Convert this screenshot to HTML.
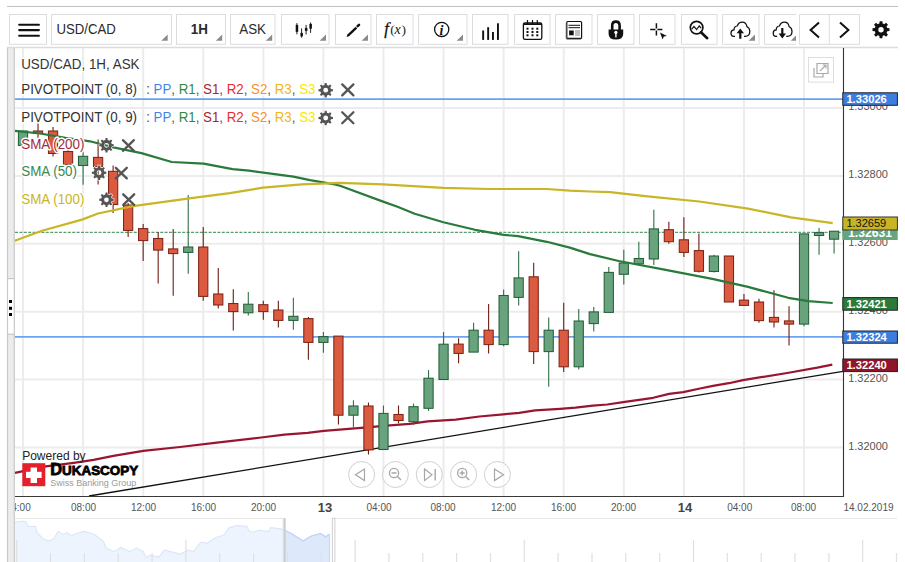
<!DOCTYPE html>
<html><head><meta charset="utf-8"><style>
html,body{margin:0;padding:0;background:#fff;}
body{width:905px;height:562px;position:relative;overflow:hidden;font-family:"Liberation Sans",sans-serif;}
</style></head><body>
<svg width="905" height="562" style="position:absolute;left:0;top:0"><rect x="7.5" y="48" width="6.8" height="230.6" fill="#ececec"/><rect x="7.5" y="334.3" width="6.8" height="228" fill="#ececec"/><line x1="7.5" y1="334.3" x2="14.3" y2="334.3" stroke="#c8c8c8" stroke-width="1.2"/><line x1="7.5" y1="47" x2="7.5" y2="562" stroke="#c8c8c8" stroke-width="1.2"/><line x1="14.3" y1="47" x2="14.3" y2="562" stroke="#c8c8c8" stroke-width="1.2"/><line x1="7.5" y1="278.6" x2="14.3" y2="278.6" stroke="#c8c8c8" stroke-width="1.2"/><rect x="9" y="300" width="3" height="3" fill="#000"/><rect x="9" y="306.8" width="3" height="3" fill="#000"/><rect x="9" y="313" width="3" height="3" fill="#000"/><line x1="7" y1="47.5" x2="898" y2="47.5" stroke="#dcdcdc" stroke-width="1.4"/><line x1="23.00" y1="48" x2="23.00" y2="496" stroke="#ececec" stroke-width="2"/><line x1="83.08" y1="48" x2="83.08" y2="496" stroke="#ececec" stroke-width="2"/><line x1="143.16" y1="48" x2="143.16" y2="496" stroke="#ececec" stroke-width="2"/><line x1="203.24" y1="48" x2="203.24" y2="496" stroke="#ececec" stroke-width="2"/><line x1="263.32" y1="48" x2="263.32" y2="496" stroke="#ececec" stroke-width="2"/><line x1="323.40" y1="48" x2="323.40" y2="496" stroke="#ececec" stroke-width="2"/><line x1="383.48" y1="48" x2="383.48" y2="496" stroke="#ececec" stroke-width="2"/><line x1="443.56" y1="48" x2="443.56" y2="496" stroke="#ececec" stroke-width="2"/><line x1="503.64" y1="48" x2="503.64" y2="496" stroke="#ececec" stroke-width="2"/><line x1="563.72" y1="48" x2="563.72" y2="496" stroke="#ececec" stroke-width="2"/><line x1="623.80" y1="48" x2="623.80" y2="496" stroke="#ececec" stroke-width="2"/><line x1="683.88" y1="48" x2="683.88" y2="496" stroke="#ececec" stroke-width="2"/><line x1="743.96" y1="48" x2="743.96" y2="496" stroke="#ececec" stroke-width="2"/><line x1="804.04" y1="48" x2="804.04" y2="496" stroke="#ececec" stroke-width="2"/><line x1="15" y1="108.0" x2="843" y2="108.0" stroke="#ececec" stroke-width="2"/><line x1="15" y1="175.9" x2="843" y2="175.9" stroke="#ececec" stroke-width="2"/><line x1="15" y1="243.8" x2="843" y2="243.8" stroke="#ececec" stroke-width="2"/><line x1="15" y1="311.7" x2="843" y2="311.7" stroke="#ececec" stroke-width="2"/><line x1="15" y1="379.6" x2="843" y2="379.6" stroke="#ececec" stroke-width="2"/><line x1="15" y1="447.5" x2="843" y2="447.5" stroke="#ececec" stroke-width="2"/><line x1="15" y1="99.2" x2="843" y2="99.2" stroke="#6aa0ef" stroke-width="1.8"/><line x1="15" y1="336.8" x2="843" y2="336.8" stroke="#6ea3ef" stroke-width="1.8"/><line x1="15" y1="232.3" x2="843" y2="232.3" stroke="#5a9e70" stroke-width="1.2" stroke-dasharray="3,1.4"/><line x1="89" y1="496" x2="843" y2="371.3" stroke="#111" stroke-width="1.3"/><path d="M15.0,472.8 L45.8,466.4 L73.7,462.8 L93.6,459.9 L113.4,455.9 L143.3,450.9 L180.0,447.0 L214.8,442.8 L261.2,437.5 L284.4,434.7 L307.6,432.9 L323.9,430.8 L361.0,427.8 L390.0,425.4 L409.8,423.8 L427.7,421.3 L455.6,419.7 L479.4,416.5 L503.3,414.3 L519.2,412.9 L535.1,410.3 L560.0,408.9 L575.4,407.7 L593.0,405.7 L607.2,404.5 L624.9,401.8 L653.2,397.8 L669.0,393.9 L683.2,392.1 L700.0,388.5 L713.0,385.9 L728.9,383.2 L743.0,380.1 L787.2,373.0 L817.3,367.7 L832.3,364.7" fill="none" stroke="#9a1630" stroke-width="2.2" stroke-linejoin="round"/><line x1="23.00" y1="131.0" x2="23.00" y2="145.5" stroke="#2f6f47" stroke-width="1.1"/><rect x="18.40" y="131.0" width="9.2" height="14.5" fill="#68a37e" stroke="#245f39" stroke-width="1.05"/><line x1="38.02" y1="123.0" x2="38.02" y2="138.0" stroke="#6e1b12" stroke-width="1.1"/><rect x="33.42" y="131.0" width="9.2" height="2.5" fill="#dc5a40" stroke="#7d2416" stroke-width="1.05"/><line x1="53.04" y1="127.0" x2="53.04" y2="156.5" stroke="#6e1b12" stroke-width="1.1"/><rect x="48.44" y="131.0" width="9.2" height="22.5" fill="#dc5a40" stroke="#7d2416" stroke-width="1.05"/><line x1="68.06" y1="150.0" x2="68.06" y2="165.5" stroke="#6e1b12" stroke-width="1.1"/><rect x="63.46" y="151.5" width="9.2" height="13.3" fill="#dc5a40" stroke="#7d2416" stroke-width="1.05"/><line x1="83.08" y1="151.7" x2="83.08" y2="184.8" stroke="#2f6f47" stroke-width="1.1"/><rect x="78.48" y="156.3" width="9.2" height="9.2" fill="#68a37e" stroke="#245f39" stroke-width="1.05"/><line x1="98.10" y1="139.6" x2="98.10" y2="184.5" stroke="#6e1b12" stroke-width="1.1"/><rect x="93.50" y="157.4" width="9.2" height="9.3" fill="#dc5a40" stroke="#7d2416" stroke-width="1.05"/><line x1="113.12" y1="165.5" x2="113.12" y2="213.0" stroke="#6e1b12" stroke-width="1.1"/><rect x="108.52" y="171.3" width="9.2" height="33.2" fill="#dc5a40" stroke="#7d2416" stroke-width="1.05"/><line x1="128.14" y1="203.0" x2="128.14" y2="237.0" stroke="#6e1b12" stroke-width="1.1"/><rect x="123.54" y="205.0" width="9.2" height="25.4" fill="#dc5a40" stroke="#7d2416" stroke-width="1.05"/><line x1="143.16" y1="224.0" x2="143.16" y2="261.0" stroke="#6e1b12" stroke-width="1.1"/><rect x="138.56" y="228.6" width="9.2" height="12.0" fill="#dc5a40" stroke="#7d2416" stroke-width="1.05"/><line x1="158.18" y1="232.0" x2="158.18" y2="283.6" stroke="#6e1b12" stroke-width="1.1"/><rect x="153.58" y="238.5" width="9.2" height="11.6" fill="#dc5a40" stroke="#7d2416" stroke-width="1.05"/><line x1="173.20" y1="229.0" x2="173.20" y2="295.7" stroke="#6e1b12" stroke-width="1.1"/><rect x="168.60" y="248.9" width="9.2" height="4.7" fill="#dc5a40" stroke="#7d2416" stroke-width="1.05"/><line x1="188.22" y1="195.0" x2="188.22" y2="273.7" stroke="#2f6f47" stroke-width="1.1"/><rect x="183.62" y="247.0" width="9.2" height="5.4" fill="#68a37e" stroke="#245f39" stroke-width="1.05"/><line x1="203.24" y1="227.0" x2="203.24" y2="300.7" stroke="#6e1b12" stroke-width="1.1"/><rect x="198.64" y="247.0" width="9.2" height="49.4" fill="#dc5a40" stroke="#7d2416" stroke-width="1.05"/><line x1="218.26" y1="268.0" x2="218.26" y2="308.4" stroke="#6e1b12" stroke-width="1.1"/><rect x="213.66" y="294.0" width="9.2" height="11.0" fill="#dc5a40" stroke="#7d2416" stroke-width="1.05"/><line x1="233.28" y1="289.2" x2="233.28" y2="330.6" stroke="#6e1b12" stroke-width="1.1"/><rect x="228.68" y="303.5" width="9.2" height="8.1" fill="#dc5a40" stroke="#7d2416" stroke-width="1.05"/><line x1="248.30" y1="292.0" x2="248.30" y2="315.6" stroke="#2f6f47" stroke-width="1.1"/><rect x="243.70" y="304.2" width="9.2" height="8.6" fill="#68a37e" stroke="#245f39" stroke-width="1.05"/><line x1="263.32" y1="300.8" x2="263.32" y2="319.7" stroke="#6e1b12" stroke-width="1.1"/><rect x="258.72" y="304.7" width="9.2" height="6.9" fill="#dc5a40" stroke="#7d2416" stroke-width="1.05"/><line x1="278.34" y1="300.8" x2="278.34" y2="327.4" stroke="#6e1b12" stroke-width="1.1"/><rect x="273.74" y="310.0" width="9.2" height="10.4" fill="#dc5a40" stroke="#7d2416" stroke-width="1.05"/><line x1="293.36" y1="297.8" x2="293.36" y2="329.7" stroke="#2f6f47" stroke-width="1.1"/><rect x="288.76" y="316.3" width="9.2" height="4.1" fill="#68a37e" stroke="#245f39" stroke-width="1.05"/><line x1="308.38" y1="317.0" x2="308.38" y2="359.8" stroke="#6e1b12" stroke-width="1.1"/><rect x="303.78" y="318.6" width="9.2" height="23.8" fill="#dc5a40" stroke="#7d2416" stroke-width="1.05"/><line x1="323.40" y1="332.0" x2="323.40" y2="352.8" stroke="#2f6f47" stroke-width="1.1"/><rect x="318.80" y="336.6" width="9.2" height="5.8" fill="#68a37e" stroke="#245f39" stroke-width="1.05"/><line x1="338.42" y1="336.0" x2="338.42" y2="424.5" stroke="#6e1b12" stroke-width="1.1"/><rect x="333.82" y="336.1" width="9.2" height="79.1" fill="#dc5a40" stroke="#7d2416" stroke-width="1.05"/><line x1="353.44" y1="400.2" x2="353.44" y2="427.2" stroke="#2f6f47" stroke-width="1.1"/><rect x="348.84" y="406.0" width="9.2" height="9.2" fill="#68a37e" stroke="#245f39" stroke-width="1.05"/><line x1="368.46" y1="402.5" x2="368.46" y2="454.5" stroke="#6e1b12" stroke-width="1.1"/><rect x="363.86" y="406.0" width="9.2" height="43.9" fill="#dc5a40" stroke="#7d2416" stroke-width="1.05"/><line x1="383.48" y1="405.5" x2="383.48" y2="449.5" stroke="#2f6f47" stroke-width="1.1"/><rect x="378.88" y="413.4" width="9.2" height="36.1" fill="#68a37e" stroke="#245f39" stroke-width="1.05"/><line x1="398.50" y1="405.5" x2="398.50" y2="423.3" stroke="#6e1b12" stroke-width="1.1"/><rect x="393.90" y="414.5" width="9.2" height="6.0" fill="#dc5a40" stroke="#7d2416" stroke-width="1.05"/><line x1="413.52" y1="403.6" x2="413.52" y2="425.0" stroke="#2f6f47" stroke-width="1.1"/><rect x="408.92" y="406.7" width="9.2" height="15.0" fill="#68a37e" stroke="#245f39" stroke-width="1.05"/><line x1="428.54" y1="370.1" x2="428.54" y2="411.0" stroke="#2f6f47" stroke-width="1.1"/><rect x="423.94" y="378.2" width="9.2" height="30.1" fill="#68a37e" stroke="#245f39" stroke-width="1.05"/><line x1="443.56" y1="332.0" x2="443.56" y2="380.0" stroke="#2f6f47" stroke-width="1.1"/><rect x="438.96" y="344.2" width="9.2" height="35.3" fill="#68a37e" stroke="#245f39" stroke-width="1.05"/><line x1="458.58" y1="338.2" x2="458.58" y2="363.3" stroke="#6e1b12" stroke-width="1.1"/><rect x="453.98" y="344.1" width="9.2" height="9.3" fill="#dc5a40" stroke="#7d2416" stroke-width="1.05"/><line x1="473.60" y1="322.7" x2="473.60" y2="352.1" stroke="#2f6f47" stroke-width="1.1"/><rect x="469.00" y="330.2" width="9.2" height="21.9" fill="#68a37e" stroke="#245f39" stroke-width="1.05"/><line x1="488.62" y1="304.0" x2="488.62" y2="353.4" stroke="#6e1b12" stroke-width="1.1"/><rect x="484.02" y="330.2" width="9.2" height="14.4" fill="#dc5a40" stroke="#7d2416" stroke-width="1.05"/><line x1="503.64" y1="289.4" x2="503.64" y2="346.2" stroke="#2f6f47" stroke-width="1.1"/><rect x="499.04" y="295.5" width="9.2" height="49.1" fill="#68a37e" stroke="#245f39" stroke-width="1.05"/><line x1="518.66" y1="251.2" x2="518.66" y2="305.4" stroke="#2f6f47" stroke-width="1.1"/><rect x="514.06" y="277.9" width="9.2" height="19.5" fill="#68a37e" stroke="#245f39" stroke-width="1.05"/><line x1="533.68" y1="262.7" x2="533.68" y2="364.1" stroke="#6e1b12" stroke-width="1.1"/><rect x="529.08" y="276.8" width="9.2" height="74.8" fill="#dc5a40" stroke="#7d2416" stroke-width="1.05"/><line x1="548.70" y1="317.4" x2="548.70" y2="386.8" stroke="#2f6f47" stroke-width="1.1"/><rect x="544.10" y="330.2" width="9.2" height="21.4" fill="#68a37e" stroke="#245f39" stroke-width="1.05"/><line x1="563.72" y1="302.7" x2="563.72" y2="372.1" stroke="#6e1b12" stroke-width="1.1"/><rect x="559.12" y="330.2" width="9.2" height="36.6" fill="#dc5a40" stroke="#7d2416" stroke-width="1.05"/><line x1="578.74" y1="309.0" x2="578.74" y2="369.4" stroke="#2f6f47" stroke-width="1.1"/><rect x="574.14" y="321.0" width="9.2" height="45.8" fill="#68a37e" stroke="#245f39" stroke-width="1.05"/><line x1="593.76" y1="307.1" x2="593.76" y2="331.6" stroke="#2f6f47" stroke-width="1.1"/><rect x="589.16" y="311.9" width="9.2" height="11.7" fill="#68a37e" stroke="#245f39" stroke-width="1.05"/><line x1="608.78" y1="267.0" x2="608.78" y2="312.4" stroke="#2f6f47" stroke-width="1.1"/><rect x="604.18" y="272.4" width="9.2" height="40.0" fill="#68a37e" stroke="#245f39" stroke-width="1.05"/><line x1="623.80" y1="249.7" x2="623.80" y2="284.4" stroke="#2f6f47" stroke-width="1.1"/><rect x="619.20" y="263.0" width="9.2" height="11.3" fill="#68a37e" stroke="#245f39" stroke-width="1.05"/><line x1="638.82" y1="241.7" x2="638.82" y2="263.9" stroke="#2f6f47" stroke-width="1.1"/><rect x="634.22" y="258.5" width="9.2" height="5.4" fill="#68a37e" stroke="#245f39" stroke-width="1.05"/><line x1="653.84" y1="209.7" x2="653.84" y2="264.9" stroke="#2f6f47" stroke-width="1.1"/><rect x="649.24" y="228.9" width="9.2" height="30.1" fill="#68a37e" stroke="#245f39" stroke-width="1.05"/><line x1="668.86" y1="221.7" x2="668.86" y2="243.8" stroke="#6e1b12" stroke-width="1.1"/><rect x="664.26" y="229.7" width="9.2" height="12.0" fill="#dc5a40" stroke="#7d2416" stroke-width="1.05"/><line x1="683.88" y1="217.2" x2="683.88" y2="256.9" stroke="#6e1b12" stroke-width="1.1"/><rect x="679.28" y="239.8" width="9.2" height="12.6" fill="#dc5a40" stroke="#7d2416" stroke-width="1.05"/><line x1="698.90" y1="233.5" x2="698.90" y2="272.4" stroke="#6e1b12" stroke-width="1.1"/><rect x="694.30" y="250.6" width="9.2" height="20.7" fill="#dc5a40" stroke="#7d2416" stroke-width="1.05"/><line x1="713.92" y1="254.7" x2="713.92" y2="272.6" stroke="#2f6f47" stroke-width="1.1"/><rect x="709.32" y="256.0" width="9.2" height="15.5" fill="#68a37e" stroke="#245f39" stroke-width="1.05"/><line x1="728.94" y1="256.0" x2="728.94" y2="302.0" stroke="#6e1b12" stroke-width="1.1"/><rect x="724.34" y="256.0" width="9.2" height="46.0" fill="#dc5a40" stroke="#7d2416" stroke-width="1.05"/><line x1="743.96" y1="294.0" x2="743.96" y2="306.0" stroke="#6e1b12" stroke-width="1.1"/><rect x="739.36" y="300.1" width="9.2" height="5.3" fill="#dc5a40" stroke="#7d2416" stroke-width="1.05"/><line x1="758.98" y1="298.7" x2="758.98" y2="322.8" stroke="#6e1b12" stroke-width="1.1"/><rect x="754.38" y="302.0" width="9.2" height="18.6" fill="#dc5a40" stroke="#7d2416" stroke-width="1.05"/><line x1="774.00" y1="290.2" x2="774.00" y2="327.6" stroke="#6e1b12" stroke-width="1.1"/><rect x="769.40" y="317.4" width="9.2" height="4.6" fill="#dc5a40" stroke="#7d2416" stroke-width="1.05"/><line x1="789.02" y1="306.2" x2="789.02" y2="345.5" stroke="#6e1b12" stroke-width="1.1"/><rect x="784.42" y="320.9" width="9.2" height="3.2" fill="#dc5a40" stroke="#7d2416" stroke-width="1.05"/><line x1="804.04" y1="233.9" x2="804.04" y2="326.2" stroke="#2f6f47" stroke-width="1.1"/><rect x="799.44" y="233.9" width="9.2" height="90.2" fill="#68a37e" stroke="#245f39" stroke-width="1.05"/><line x1="819.06" y1="228.0" x2="819.06" y2="254.7" stroke="#2f6f47" stroke-width="1.1"/><rect x="814.46" y="232.6" width="9.2" height="2.9" fill="#68a37e" stroke="#245f39" stroke-width="1.05"/><line x1="834.08" y1="231.0" x2="834.08" y2="253.4" stroke="#2f6f47" stroke-width="1.1"/><rect x="829.48" y="231.2" width="9.2" height="8.0" fill="#68a37e" stroke="#245f39" stroke-width="1.05"/><path d="M15.0,130.8 L40.0,133.5 L65.5,137.8 L90.0,141.3 L111.0,146.8 L141.4,153.1 L171.8,162.0 L203.6,163.6 L232.6,169.2 L249.0,170.6 L293.4,176.6 L310.0,180.2 L334.8,184.4 L340.0,185.8 L383.1,201.6 L397.5,206.8 L414.7,213.7 L443.4,222.3 L475.0,229.8 L503.7,234.9 L518.1,236.1 L546.8,241.8 L569.8,247.6 L590.0,254.1 L618.7,261.0 L661.8,269.1 L713.5,279.1 L748.0,286.9 L788.2,297.8 L808.3,301.2 L832.7,303.0" fill="none" stroke="#2a7a3c" stroke-width="2.2" stroke-linejoin="round"/><path d="M14.8,240.8 L42.0,230.8 L82.0,219.6 L98.0,213.5 L133.1,206.2 L191.2,198.2 L229.8,193.2 L263.0,187.7 L301.7,184.4 L340.0,182.9 L383.1,184.4 L443.4,187.8 L489.4,189.0 L546.8,189.0 L569.8,190.7 L590.0,191.5 L610.1,192.1 L647.5,196.4 L699.2,201.5 L748.0,208.7 L791.1,217.3 L832.7,223.1" fill="none" stroke="#c9b526" stroke-width="2.2" stroke-linejoin="round"/><text transform="translate(21.2,68.8) scale(1,1.1)" font-family="Liberation Sans" font-size="13.4" font-weight="normal" fill="#333" text-anchor="start" stroke="#fff" stroke-width="2.5" paint-order="stroke" stroke-linejoin="round">USD/CAD, 1H, ASK</text><text transform="translate(21.2,93.7) scale(1,1.1)" font-family="Liberation Sans" font-size="13.4" font-weight="normal" fill="#333" text-anchor="start" stroke="#fff" stroke-width="2.5" paint-order="stroke" stroke-linejoin="round">PIVOTPOINT (0, 8)</text><text transform="translate(146.2,93.7) scale(1,1.1)" font-family="Liberation Sans" font-size="13.3" font-weight="normal" fill="#333" text-anchor="start" stroke="#fff" stroke-width="2.5" paint-order="stroke" stroke-linejoin="round"><tspan fill="#555">: </tspan><tspan fill="#3d85e8">PP</tspan><tspan fill="#555">, </tspan><tspan fill="#2e8b3e">R1</tspan><tspan fill="#555">, </tspan><tspan fill="#a3262e">S1</tspan><tspan fill="#555">, </tspan><tspan fill="#ee2a2a">R2</tspan><tspan fill="#555">, </tspan><tspan fill="#f5911f">S2</tspan><tspan fill="#555">, </tspan><tspan fill="#f3b418">R3</tspan><tspan fill="#555">, </tspan><tspan fill="#f7e800">S3</tspan></text><text transform="translate(21.2,121.6) scale(1,1.1)" font-family="Liberation Sans" font-size="13.4" font-weight="normal" fill="#333" text-anchor="start" stroke="#fff" stroke-width="2.5" paint-order="stroke" stroke-linejoin="round">PIVOTPOINT (0, 9)</text><text transform="translate(146.2,121.6) scale(1,1.1)" font-family="Liberation Sans" font-size="13.3" font-weight="normal" fill="#333" text-anchor="start" stroke="#fff" stroke-width="2.5" paint-order="stroke" stroke-linejoin="round"><tspan fill="#555">: </tspan><tspan fill="#3d85e8">PP</tspan><tspan fill="#555">, </tspan><tspan fill="#2e8b3e">R1</tspan><tspan fill="#555">, </tspan><tspan fill="#a3262e">S1</tspan><tspan fill="#555">, </tspan><tspan fill="#ee2a2a">R2</tspan><tspan fill="#555">, </tspan><tspan fill="#f5911f">S2</tspan><tspan fill="#555">, </tspan><tspan fill="#f3b418">R3</tspan><tspan fill="#555">, </tspan><tspan fill="#f7e800">S3</tspan></text><path d="M330.69,88.13 L330.96,89.00 L332.94,89.24 L332.94,91.16 L330.96,91.40 L330.69,92.27 L330.27,93.07 L331.50,94.64 L330.14,96.00 L328.57,94.77 L327.77,95.19 L326.90,95.46 L326.66,97.44 L324.74,97.44 L324.50,95.46 L323.63,95.19 L322.83,94.77 L321.26,96.00 L319.90,94.64 L321.13,93.07 L320.71,92.27 L320.44,91.40 L318.46,91.16 L318.46,89.24 L320.44,89.00 L320.71,88.13 L321.13,87.33 L319.90,85.76 L321.26,84.40 L322.83,85.63 L323.63,85.21 L324.50,84.94 L324.74,82.96 L326.66,82.96 L326.90,84.94 L327.77,85.21 L328.57,85.63 L330.14,84.40 L331.50,85.76 L330.27,87.33Z M328.10,90.20 A2.4,2.4 0 1 0 323.30,90.20 A2.4,2.4 0 1 0 328.10,90.20Z" fill="#555" fill-rule="evenodd" stroke="#fff" stroke-width="1" paint-order="stroke"/><path d="M342.2,84.4 L353.4,95.4 M353.4,84.4 L342.2,95.4" stroke="#555" stroke-width="2.3" stroke-linecap="round" fill="none" /><path d="M330.69,115.93 L330.96,116.80 L332.94,117.04 L332.94,118.96 L330.96,119.20 L330.69,120.07 L330.27,120.87 L331.50,122.44 L330.14,123.80 L328.57,122.57 L327.77,122.99 L326.90,123.26 L326.66,125.24 L324.74,125.24 L324.50,123.26 L323.63,122.99 L322.83,122.57 L321.26,123.80 L319.90,122.44 L321.13,120.87 L320.71,120.07 L320.44,119.20 L318.46,118.96 L318.46,117.04 L320.44,116.80 L320.71,115.93 L321.13,115.13 L319.90,113.56 L321.26,112.20 L322.83,113.43 L323.63,113.01 L324.50,112.74 L324.74,110.76 L326.66,110.76 L326.90,112.74 L327.77,113.01 L328.57,113.43 L330.14,112.20 L331.50,113.56 L330.27,115.13Z M328.10,118.00 A2.4,2.4 0 1 0 323.30,118.00 A2.4,2.4 0 1 0 328.10,118.00Z" fill="#555" fill-rule="evenodd" stroke="#fff" stroke-width="1" paint-order="stroke"/><path d="M342.2,112.2 L353.4,123.2 M353.4,112.2 L342.2,123.2" stroke="#555" stroke-width="2.3" stroke-linecap="round" fill="none" /><text transform="translate(21.2,148.9) scale(1,1.1)" font-family="Liberation Sans" font-size="13.4" font-weight="normal" fill="#a32a3c" text-anchor="start" stroke="#fff" stroke-width="2.5" paint-order="stroke" stroke-linejoin="round">SMA (200)</text><text transform="translate(21.2,176.1) scale(1,1.1)" font-family="Liberation Sans" font-size="13.4" font-weight="normal" fill="#378a52" text-anchor="start" stroke="#fff" stroke-width="2.5" paint-order="stroke" stroke-linejoin="round">SMA (50)</text><text transform="translate(21.2,203.8) scale(1,1.1)" font-family="Liberation Sans" font-size="13.4" font-weight="normal" fill="#c9b526" text-anchor="start" stroke="#fff" stroke-width="2.5" paint-order="stroke" stroke-linejoin="round">SMA (100)</text><path d="M111.49,143.23 L111.76,144.10 L113.74,144.34 L113.74,146.26 L111.76,146.50 L111.49,147.37 L111.07,148.17 L112.30,149.74 L110.94,151.10 L109.37,149.87 L108.57,150.29 L107.70,150.56 L107.46,152.54 L105.54,152.54 L105.30,150.56 L104.43,150.29 L103.63,149.87 L102.06,151.10 L100.70,149.74 L101.93,148.17 L101.51,147.37 L101.24,146.50 L99.26,146.26 L99.26,144.34 L101.24,144.10 L101.51,143.23 L101.93,142.43 L100.70,140.86 L102.06,139.50 L103.63,140.73 L104.43,140.31 L105.30,140.04 L105.54,138.06 L107.46,138.06 L107.70,140.04 L108.57,140.31 L109.37,140.73 L110.94,139.50 L112.30,140.86 L111.07,142.43Z M108.90,145.30 A2.4,2.4 0 1 0 104.10,145.30 A2.4,2.4 0 1 0 108.90,145.30Z" fill="#555" fill-rule="evenodd" stroke="#fff" stroke-width="1.2" paint-order="stroke"/><path d="M122.89999999999999,140.2 L133.9,150.79999999999998 M133.9,140.2 L122.89999999999999,150.79999999999998" stroke="#555" stroke-width="2.3" stroke-linecap="round" fill="none" /><path d="M104.09,170.63 L104.36,171.50 L106.34,171.74 L106.34,173.66 L104.36,173.90 L104.09,174.77 L103.67,175.57 L104.90,177.14 L103.54,178.50 L101.97,177.27 L101.17,177.69 L100.30,177.96 L100.06,179.94 L98.14,179.94 L97.90,177.96 L97.03,177.69 L96.23,177.27 L94.66,178.50 L93.30,177.14 L94.53,175.57 L94.11,174.77 L93.84,173.90 L91.86,173.66 L91.86,171.74 L93.84,171.50 L94.11,170.63 L94.53,169.83 L93.30,168.26 L94.66,166.90 L96.23,168.13 L97.03,167.71 L97.90,167.44 L98.14,165.46 L100.06,165.46 L100.30,167.44 L101.17,167.71 L101.97,168.13 L103.54,166.90 L104.90,168.26 L103.67,169.83Z M101.50,172.70 A2.4,2.4 0 1 0 96.70,172.70 A2.4,2.4 0 1 0 101.50,172.70Z" fill="#555" fill-rule="evenodd" stroke="#fff" stroke-width="1.2" paint-order="stroke"/><path d="M115.8,167.79999999999998 L126.8,178.39999999999998 M126.8,167.79999999999998 L115.8,178.39999999999998" stroke="#555" stroke-width="2.3" stroke-linecap="round" fill="none" /><path d="M111.49,197.73 L111.76,198.60 L113.74,198.84 L113.74,200.76 L111.76,201.00 L111.49,201.87 L111.07,202.67 L112.30,204.24 L110.94,205.60 L109.37,204.37 L108.57,204.79 L107.70,205.06 L107.46,207.04 L105.54,207.04 L105.30,205.06 L104.43,204.79 L103.63,204.37 L102.06,205.60 L100.70,204.24 L101.93,202.67 L101.51,201.87 L101.24,201.00 L99.26,200.76 L99.26,198.84 L101.24,198.60 L101.51,197.73 L101.93,196.93 L100.70,195.36 L102.06,194.00 L103.63,195.23 L104.43,194.81 L105.30,194.54 L105.54,192.56 L107.46,192.56 L107.70,194.54 L108.57,194.81 L109.37,195.23 L110.94,194.00 L112.30,195.36 L111.07,196.93Z M108.90,199.80 A2.4,2.4 0 1 0 104.10,199.80 A2.4,2.4 0 1 0 108.90,199.80Z" fill="#555" fill-rule="evenodd" stroke="#fff" stroke-width="1.2" paint-order="stroke"/><path d="M123.19999999999999,194.29999999999998 L134.2,204.89999999999998 M134.2,194.29999999999998 L123.19999999999999,204.89999999999998" stroke="#555" stroke-width="2.3" stroke-linecap="round" fill="none" /><text x="22.2" y="460.3" font-family="Liberation Sans" font-size="12" font-weight="normal" fill="#222" text-anchor="start" >Powered by</text><rect x="22.3" y="463.2" width="23" height="23" fill="#e4202c"/><rect x="26" y="471.8" width="15.6" height="6.2" fill="#fff"/><rect x="30.6" y="467.5" width="6.4" height="15.5" fill="#fff"/><text x="50.2" y="475.4" font-family="Liberation Sans" font-weight="bold" font-size="16.4" fill="#000" stroke="#000" stroke-width="0.8" textLength="88" lengthAdjust="spacingAndGlyphs">D<tspan font-size="13.4">UKASCOPY</tspan></text><text x="50.2" y="486.4" font-family="Liberation Sans" font-size="9" font-weight="normal" fill="#9a9a9a" text-anchor="start" >Swiss Banking Group</text><circle cx="361.6" cy="474.5" r="13" fill="#fff" fill-opacity="0.6" stroke="#d0d0d0" stroke-width="1"/><circle cx="395.4" cy="474.5" r="13" fill="#fff" fill-opacity="0.6" stroke="#d0d0d0" stroke-width="1"/><circle cx="429.3" cy="474.5" r="13" fill="#fff" fill-opacity="0.6" stroke="#d0d0d0" stroke-width="1"/><circle cx="463.6" cy="474.5" r="13" fill="#fff" fill-opacity="0.6" stroke="#d0d0d0" stroke-width="1"/><circle cx="497.4" cy="474.5" r="13" fill="#fff" fill-opacity="0.6" stroke="#d0d0d0" stroke-width="1"/><path d="M364.5,469 L355.5,474.8 L364.5,480.6 Z" fill="none" stroke="#a6a6a6" stroke-width="1.2"/><circle cx="394" cy="473" r="4.6" fill="none" stroke="#a6a6a6" stroke-width="1.3"/><path d="M391.5,473 H396.5 M397.5,476.5 L401,480" stroke="#a6a6a6" stroke-width="1.4"/><path d="M424.5,469 L432,474.8 L424.5,480.6 Z" fill="none" stroke="#a6a6a6" stroke-width="1.2"/><path d="M435.2,469 V480.6" stroke="#a6a6a6" stroke-width="1.4"/><circle cx="462.2" cy="473" r="4.6" fill="none" stroke="#a6a6a6" stroke-width="1.3"/><path d="M459.7,473 H464.7 M462.2,470.5 V475.5 M465.7,476.5 L469.2,480" stroke="#a6a6a6" stroke-width="1.4"/><path d="M494.5,469 L503.5,474.8 L494.5,480.6 Z" fill="none" stroke="#a6a6a6" stroke-width="1.2"/><rect x="808.5" y="57.5" width="25" height="24.6" fill="#fff" stroke="#dedede" stroke-width="1"/><path d="M814,68 V77 H823 V72" fill="none" stroke="#aaa" stroke-width="1.2"/><path d="M817,73.5 V63.5 H828 V73.5 H817 Z" fill="#fff" stroke="#aaa" stroke-width="1.2"/><path d="M820,71 L826,65 M822.5,65 H826 V68.5" fill="none" stroke="#aaa" stroke-width="1.1"/><line x1="843.5" y1="48" x2="843.5" y2="497" stroke="#333" stroke-width="1.1"/><line x1="15" y1="496.5" x2="844" y2="496.5" stroke="#3a3a3a" stroke-width="1.1"/><text x="848.2" y="110.4" font-family="Liberation Sans" font-size="11" font-weight="normal" fill="#555" text-anchor="start" >1.33000</text><text x="848.2" y="178.3" font-family="Liberation Sans" font-size="11" font-weight="normal" fill="#555" text-anchor="start" >1.32800</text><text x="848.2" y="246.2" font-family="Liberation Sans" font-size="11" font-weight="normal" fill="#555" text-anchor="start" >1.32600</text><text x="848.2" y="314.1" font-family="Liberation Sans" font-size="11" font-weight="normal" fill="#555" text-anchor="start" >1.32400</text><text x="848.2" y="382.0" font-family="Liberation Sans" font-size="11" font-weight="normal" fill="#555" text-anchor="start" >1.32200</text><text x="848.2" y="449.9" font-family="Liberation Sans" font-size="11" font-weight="normal" fill="#555" text-anchor="start" >1.32000</text><rect x="842.8" y="92.8" width="54.6" height="12.5" fill="#3b7ee0" stroke="#222" stroke-width="1"/><text x="846.4" y="102.9" font-family="Liberation Sans" font-size="11.2" font-weight="bold" fill="#fff" text-anchor="start" >1.33026</text><rect x="842.3" y="226" width="55.4" height="14" fill="#66a67f"/><text x="848" y="237.2" font-family="Liberation Sans" font-size="12.2" font-weight="bold" fill="#fff" text-anchor="start" >1.32631</text><rect x="842.8" y="217" width="54.6" height="13" fill="#c9b424" stroke="#333" stroke-width="1"/><text x="846.4" y="227.3" font-family="Liberation Sans" font-size="11" font-weight="normal" fill="#111" text-anchor="start" >1.32659</text><rect x="842.8" y="297.6" width="54.6" height="12.599999999999966" fill="#2c7a3b" stroke="#222" stroke-width="1"/><text x="846.4" y="307.8" font-family="Liberation Sans" font-size="11.2" font-weight="bold" fill="#fff" text-anchor="start" >1.32421</text><rect x="842.8" y="331" width="54.6" height="12.199999999999989" fill="#3b7ee0" stroke="#222" stroke-width="1"/><text x="846.4" y="341.0" font-family="Liberation Sans" font-size="11.2" font-weight="bold" fill="#fff" text-anchor="start" >1.32324</text><rect x="842.8" y="359" width="54.6" height="12.600000000000023" fill="#8f1628" stroke="#222" stroke-width="1"/><text x="846.4" y="369.2" font-family="Liberation Sans" font-size="11.2" font-weight="bold" fill="#fff" text-anchor="start" >1.32240</text><g clip-path="url(#lc)"><text x="18.2" y="511.4" font-family="Liberation Sans" font-size="10" font-weight="normal" fill="#555" text-anchor="middle" >04:00</text></g><g clip-path="url(#lc)"><text x="83.5" y="511.4" font-family="Liberation Sans" font-size="10" font-weight="normal" fill="#555" text-anchor="middle" >08:00</text></g><g clip-path="url(#lc)"><text x="143.5" y="511.4" font-family="Liberation Sans" font-size="10" font-weight="normal" fill="#555" text-anchor="middle" >12:00</text></g><g clip-path="url(#lc)"><text x="203.5" y="511.4" font-family="Liberation Sans" font-size="10" font-weight="normal" fill="#555" text-anchor="middle" >16:00</text></g><g clip-path="url(#lc)"><text x="263.5" y="511.4" font-family="Liberation Sans" font-size="10" font-weight="normal" fill="#555" text-anchor="middle" >20:00</text></g><g clip-path="url(#lc)"><text x="379" y="511.4" font-family="Liberation Sans" font-size="10" font-weight="normal" fill="#555" text-anchor="middle" >04:00</text></g><g clip-path="url(#lc)"><text x="443" y="511.4" font-family="Liberation Sans" font-size="10" font-weight="normal" fill="#555" text-anchor="middle" >08:00</text></g><g clip-path="url(#lc)"><text x="503.5" y="511.4" font-family="Liberation Sans" font-size="10" font-weight="normal" fill="#555" text-anchor="middle" >12:00</text></g><g clip-path="url(#lc)"><text x="563.5" y="511.4" font-family="Liberation Sans" font-size="10" font-weight="normal" fill="#555" text-anchor="middle" >16:00</text></g><g clip-path="url(#lc)"><text x="623.5" y="511.4" font-family="Liberation Sans" font-size="10" font-weight="normal" fill="#555" text-anchor="middle" >20:00</text></g><g clip-path="url(#lc)"><text x="739.7" y="511.4" font-family="Liberation Sans" font-size="10" font-weight="normal" fill="#555" text-anchor="middle" >04:00</text></g><g clip-path="url(#lc)"><text x="803.5" y="511.4" font-family="Liberation Sans" font-size="10" font-weight="normal" fill="#555" text-anchor="middle" >08:00</text></g><text x="325" y="511.5" font-family="Liberation Sans" font-size="13" font-weight="bold" fill="#444" text-anchor="middle" >13</text><text x="685" y="511.5" font-family="Liberation Sans" font-size="13" font-weight="bold" fill="#444" text-anchor="middle" >14</text><text x="868.5" y="511.4" font-family="Liberation Sans" font-size="10" font-weight="normal" fill="#555" text-anchor="middle" >14.02.2019</text><defs><clipPath id="selc"><rect x="285.5" y="518" width="47" height="44"/></clipPath><clipPath id="lc"><rect x="15" y="0" width="890" height="562"/></clipPath></defs><line x1="14.5" y1="518.5" x2="283" y2="518.5" stroke="#e6e6e6" stroke-width="1.2"/><line x1="335" y1="518.5" x2="897" y2="518.5" stroke="#e6e6e6" stroke-width="1.2"/><path d="M15.0,522.3 L21.0,521.3 L25.8,521.5 L28.2,526.5 L35.5,526.5 L37.3,532.6 L42.8,538.7 L48.9,541.1 L53.8,538.7 L58.0,531.4 L62.3,534.4 L67.1,532.6 L71.4,535.7 L75.6,533.8 L84.1,531.4 L89.0,532.6 L95.1,535.1 L103.6,541.7 L106.0,547.8 L113.3,551.5 L117.0,550.2 L120.6,547.5 L129.9,551.5 L136.5,548.1 L143.1,551.5 L146.5,557.4 L149.8,555.4 L159.0,556.8 L164.4,550.1 L180.3,554.1 L188.2,550.1 L193.5,551.5 L200.2,542.8 L204.1,542.2 L206.8,543.5 L216.1,537.5 L224.0,534.9 L229.3,527.6 L236.9,525.6 L246.9,526.3 L248.9,530.9 L252.8,532.2 L259.5,530.2 L268.8,531.6 L270.7,527.6 L280.7,528.9 L286.0,530.9 L291.3,533.6 L303.2,540.9 L311.2,536.2 L320.5,533.6 L325.8,536.9 L329.1,534.2 L329.5,562 L15,562 Z" fill="#eef4fd" stroke="none"/><path d="M15.0,522.3 L21.0,521.3 L25.8,521.5 L28.2,526.5 L35.5,526.5 L37.3,532.6 L42.8,538.7 L48.9,541.1 L53.8,538.7 L58.0,531.4 L62.3,534.4 L67.1,532.6 L71.4,535.7 L75.6,533.8 L84.1,531.4 L89.0,532.6 L95.1,535.1 L103.6,541.7 L106.0,547.8 L113.3,551.5 L117.0,550.2 L120.6,547.5 L129.9,551.5 L136.5,548.1 L143.1,551.5 L146.5,557.4 L149.8,555.4 L159.0,556.8 L164.4,550.1 L180.3,554.1 L188.2,550.1 L193.5,551.5 L200.2,542.8 L204.1,542.2 L206.8,543.5 L216.1,537.5 L224.0,534.9 L229.3,527.6 L236.9,525.6 L246.9,526.3 L248.9,530.9 L252.8,532.2 L259.5,530.2 L268.8,531.6 L270.7,527.6 L280.7,528.9 L286.0,530.9 L291.3,533.6 L303.2,540.9 L311.2,536.2 L320.5,533.6 L325.8,536.9 L329.1,534.2" fill="none" stroke="#dae6f8" stroke-width="1.1"/><g clip-path="url(#selc)"><path d="M15.0,522.3 L21.0,521.3 L25.8,521.5 L28.2,526.5 L35.5,526.5 L37.3,532.6 L42.8,538.7 L48.9,541.1 L53.8,538.7 L58.0,531.4 L62.3,534.4 L67.1,532.6 L71.4,535.7 L75.6,533.8 L84.1,531.4 L89.0,532.6 L95.1,535.1 L103.6,541.7 L106.0,547.8 L113.3,551.5 L117.0,550.2 L120.6,547.5 L129.9,551.5 L136.5,548.1 L143.1,551.5 L146.5,557.4 L149.8,555.4 L159.0,556.8 L164.4,550.1 L180.3,554.1 L188.2,550.1 L193.5,551.5 L200.2,542.8 L204.1,542.2 L206.8,543.5 L216.1,537.5 L224.0,534.9 L229.3,527.6 L236.9,525.6 L246.9,526.3 L248.9,530.9 L252.8,532.2 L259.5,530.2 L268.8,531.6 L270.7,527.6 L280.7,528.9 L286.0,530.9 L291.3,533.6 L303.2,540.9 L311.2,536.2 L320.5,533.6 L325.8,536.9 L329.1,534.2 L329.5,562 L15,562 Z" fill="#dde9fb" stroke="none"/><path d="M15.0,522.3 L21.0,521.3 L25.8,521.5 L28.2,526.5 L35.5,526.5 L37.3,532.6 L42.8,538.7 L48.9,541.1 L53.8,538.7 L58.0,531.4 L62.3,534.4 L67.1,532.6 L71.4,535.7 L75.6,533.8 L84.1,531.4 L89.0,532.6 L95.1,535.1 L103.6,541.7 L106.0,547.8 L113.3,551.5 L117.0,550.2 L120.6,547.5 L129.9,551.5 L136.5,548.1 L143.1,551.5 L146.5,557.4 L149.8,555.4 L159.0,556.8 L164.4,550.1 L180.3,554.1 L188.2,550.1 L193.5,551.5 L200.2,542.8 L204.1,542.2 L206.8,543.5 L216.1,537.5 L224.0,534.9 L229.3,527.6 L236.9,525.6 L246.9,526.3 L248.9,530.9 L252.8,532.2 L259.5,530.2 L268.8,531.6 L270.7,527.6 L280.7,528.9 L286.0,530.9 L291.3,533.6 L303.2,540.9 L311.2,536.2 L320.5,533.6 L325.8,536.9 L329.1,534.2" fill="none" stroke="#c2d7f5" stroke-width="1.4"/><line x1="329.5" y1="534" x2="329.5" y2="562" stroke="#c8dbf6" stroke-width="1.2"/></g><line x1="16.7" y1="540" x2="16.7" y2="562" stroke="#e0e0e0" stroke-width="1.2"/><line x1="50.5" y1="553" x2="50.5" y2="562" stroke="#e0e0e0" stroke-width="1.2"/><line x1="84.4" y1="553" x2="84.4" y2="562" stroke="#e0e0e0" stroke-width="1.2"/><line x1="118.2" y1="553" x2="118.2" y2="562" stroke="#e0e0e0" stroke-width="1.2"/><line x1="152.1" y1="553" x2="152.1" y2="562" stroke="#e0e0e0" stroke-width="1.2"/><line x1="185.9" y1="540" x2="185.9" y2="562" stroke="#e0e0e0" stroke-width="1.2"/><line x1="219.7" y1="553" x2="219.7" y2="562" stroke="#e0e0e0" stroke-width="1.2"/><line x1="253.6" y1="553" x2="253.6" y2="562" stroke="#e0e0e0" stroke-width="1.2"/><line x1="287.4" y1="553" x2="287.4" y2="562" stroke="#e0e0e0" stroke-width="1.2"/><line x1="321.3" y1="553" x2="321.3" y2="562" stroke="#e0e0e0" stroke-width="1.2"/><line x1="355.1" y1="540" x2="355.1" y2="562" stroke="#e0e0e0" stroke-width="1.2"/><line x1="388.9" y1="553" x2="388.9" y2="562" stroke="#e0e0e0" stroke-width="1.2"/><line x1="422.8" y1="553" x2="422.8" y2="562" stroke="#e0e0e0" stroke-width="1.2"/><line x1="456.6" y1="553" x2="456.6" y2="562" stroke="#e0e0e0" stroke-width="1.2"/><line x1="490.5" y1="553" x2="490.5" y2="562" stroke="#e0e0e0" stroke-width="1.2"/><line x1="524.3" y1="540" x2="524.3" y2="562" stroke="#e0e0e0" stroke-width="1.2"/><line x1="558.1" y1="553" x2="558.1" y2="562" stroke="#e0e0e0" stroke-width="1.2"/><line x1="592.0" y1="553" x2="592.0" y2="562" stroke="#e0e0e0" stroke-width="1.2"/><line x1="625.8" y1="553" x2="625.8" y2="562" stroke="#e0e0e0" stroke-width="1.2"/><line x1="659.7" y1="553" x2="659.7" y2="562" stroke="#e0e0e0" stroke-width="1.2"/><line x1="693.5" y1="540" x2="693.5" y2="562" stroke="#e0e0e0" stroke-width="1.2"/><line x1="727.3" y1="553" x2="727.3" y2="562" stroke="#e0e0e0" stroke-width="1.2"/><line x1="761.2" y1="553" x2="761.2" y2="562" stroke="#e0e0e0" stroke-width="1.2"/><line x1="795.0" y1="553" x2="795.0" y2="562" stroke="#e0e0e0" stroke-width="1.2"/><line x1="828.9" y1="553" x2="828.9" y2="562" stroke="#e0e0e0" stroke-width="1.2"/><line x1="862.7" y1="540" x2="862.7" y2="562" stroke="#e0e0e0" stroke-width="1.2"/><line x1="896.5" y1="553" x2="896.5" y2="562" stroke="#e0e0e0" stroke-width="1.2"/><rect x="282.6" y="518.2" width="2.8" height="44" fill="#e0e0e0"/><line x1="284.9" y1="518" x2="284.9" y2="562" stroke="#b8b8b8" stroke-width="0.9"/><rect x="332.3" y="518.2" width="2.6" height="44" fill="#fff" stroke="#c4c4c4" stroke-width="0.8"/></svg>
<svg width="905" height="50" style="position:absolute;left:0;top:0"><line x1="7" y1="6.5" x2="898" y2="6.5" stroke="#c2c2c2" stroke-width="1.2"/><rect x="9.5" y="14.5" width="37" height="29.8" fill="#fff" stroke="#dcdcdc" stroke-width="1"/><rect x="51.5" y="14.5" width="120" height="29.8" fill="#fff" stroke="#dcdcdc" stroke-width="1"/><rect x="176.5" y="14.5" width="49" height="29.8" fill="#fff" stroke="#dcdcdc" stroke-width="1"/><rect x="230.5" y="14.5" width="44.5" height="29.8" fill="#fff" stroke="#dcdcdc" stroke-width="1"/><rect x="281.5" y="14.5" width="47.5" height="29.8" fill="#fff" stroke="#dcdcdc" stroke-width="1"/><rect x="335.5" y="14.5" width="35.5" height="29.8" fill="#fff" stroke="#dcdcdc" stroke-width="1"/><rect x="376.5" y="14.5" width="36.5" height="29.8" fill="#fff" stroke="#dcdcdc" stroke-width="1"/><rect x="418.5" y="14.5" width="48.5" height="29.8" fill="#fff" stroke="#dcdcdc" stroke-width="1"/><rect x="472.5" y="14.5" width="35.5" height="29.8" fill="#fff" stroke="#dcdcdc" stroke-width="1"/><rect x="514.5" y="14.5" width="35.5" height="29.8" fill="#fff" stroke="#dcdcdc" stroke-width="1"/><rect x="555.5" y="14.5" width="36.5" height="29.8" fill="#fff" stroke="#dcdcdc" stroke-width="1"/><rect x="597.5" y="14.5" width="36.5" height="29.8" fill="#fff" stroke="#dcdcdc" stroke-width="1"/><rect x="639.5" y="14.5" width="35.5" height="29.8" fill="#fff" stroke="#dcdcdc" stroke-width="1"/><rect x="681.5" y="14.5" width="35.5" height="29.8" fill="#fff" stroke="#dcdcdc" stroke-width="1"/><rect x="722.5" y="14.5" width="36.5" height="29.8" fill="#fff" stroke="#dcdcdc" stroke-width="1"/><path d="M764.5,14.5 H796 M764.5,14.5 V44.3 H796" fill="none" stroke="#dcdcdc" stroke-width="1"/><rect x="799.5" y="14.5" width="60" height="29.8" fill="#fff" stroke="#dcdcdc" stroke-width="1"/><line x1="829.3" y1="14.5" x2="829.3" y2="44.3" stroke="#dcdcdc" stroke-width="1"/><line x1="19.2" y1="24.8" x2="38.9" y2="24.8" stroke="#111" stroke-width="2.1" stroke-linecap="round"/><line x1="19.2" y1="30.1" x2="38.9" y2="30.1" stroke="#111" stroke-width="2.1" stroke-linecap="round"/><line x1="19.2" y1="35.7" x2="38.9" y2="35.7" stroke="#111" stroke-width="2.1" stroke-linecap="round"/><text transform="translate(56.4,33.9) scale(1,1.12)" font-family="Liberation Sans" font-size="13.2" font-weight="normal" fill="#2a2a2a" text-anchor="start" >USD/CAD</text><path d="M167.7,40.8 L161.29999999999998,40.8 L167.7,34.4 Z" fill="#8a8a8a"/><text transform="translate(199.3,33.9) scale(1,1.12)" font-family="Liberation Sans" font-size="13.4" font-weight="bold" fill="#2a2a2a" text-anchor="middle" >1H</text><path d="M222.2,40.8 L215.79999999999998,40.8 L222.2,34.4 Z" fill="#8a8a8a"/><text transform="translate(239.2,33.9) scale(1,1.12)" font-family="Liberation Sans" font-size="13.4" font-weight="normal" fill="#2a2a2a" text-anchor="start" >ASK</text><path d="M272.2,40.8 L265.8,40.8 L272.2,34.4 Z" fill="#8a8a8a"/><line x1="296.9" y1="23.1" x2="296.9" y2="34.4" stroke="#222" stroke-width="1"/><rect x="295.7" y="24.9" width="2.5" height="7.0" fill="#111"/><line x1="301.59999999999997" y1="28.4" x2="301.59999999999997" y2="37.7" stroke="#222" stroke-width="1"/><rect x="300.4" y="32.9" width="2.5" height="3.5" fill="#111"/><line x1="306.09999999999997" y1="24.9" x2="306.09999999999997" y2="34.4" stroke="#222" stroke-width="1"/><rect x="304.9" y="27.9" width="2.5" height="3.0" fill="#111"/><line x1="310.59999999999997" y1="22.5" x2="310.59999999999997" y2="32.9" stroke="#222" stroke-width="1"/><rect x="309.4" y="23.9" width="2.5" height="4.800000000000001" fill="#111"/><path d="M326,40.8 L319.6,40.8 L326,34.4 Z" fill="#8a8a8a"/><path d="M346.6,37.1 L347.4,34.5 L355.6,26.7 L357.2,28.5 L349,36.3 Z" fill="#111"/><line x1="357.6" y1="26.2" x2="359" y2="24.9" stroke="#111" stroke-width="2.5" stroke-linecap="round"/><path d="M368,40.8 L361.6,40.8 L368,34.4 Z" fill="#8a8a8a"/><text x="384.2" y="33.8" font-family="Liberation Serif" font-style="italic" font-size="16.5" fill="#111" stroke="#111" stroke-width="0.3">f</text><text x="390.2" y="33.8" font-family="Liberation Serif" font-size="13.5" fill="#222">(</text><text x="394.4" y="33.8" font-family="Liberation Serif" font-style="italic" font-size="14" fill="#111">x</text><text x="401.4" y="33.8" font-family="Liberation Serif" font-size="13.5" fill="#222">)</text><circle cx="441.7" cy="29.4" r="7.1" fill="none" stroke="#111" stroke-width="1.3"/><text x="441.4" y="34.6" font-family="Liberation Serif" font-style="italic" font-weight="bold" font-size="14" fill="#111" text-anchor="middle">i</text><path d="M463,40.8 L456.6,40.8 L463,34.4 Z" fill="#8a8a8a"/><rect x="482.2" y="30.5" width="1.9" height="9.399999999999999" fill="#111"/><rect x="487.2" y="27.2" width="1.9" height="12.7" fill="#111"/><rect x="492" y="32" width="1.9" height="7.899999999999999" fill="#111"/><rect x="497" y="23.3" width="1.9" height="16.599999999999998" fill="#111"/><rect x="523.4" y="23" width="18.4" height="16.4" rx="1.6" fill="none" stroke="#111" stroke-width="1.3"/><line x1="523.4" y1="24.2" x2="541.8" y2="24.2" stroke="#111" stroke-width="1.6"/><line x1="527.5" y1="20" x2="527.5" y2="25" stroke="#111" stroke-width="1.2"/><rect x="526.5" y="27.7" width="2" height="2" fill="#111"/><rect x="526.5" y="31" width="2" height="2" fill="#111"/><rect x="526.5" y="34.3" width="2" height="2" fill="#111"/><line x1="532.5" y1="20" x2="532.5" y2="25" stroke="#111" stroke-width="1.2"/><rect x="531.5" y="27.7" width="2" height="2" fill="#111"/><rect x="531.5" y="31" width="2" height="2" fill="#111"/><rect x="531.5" y="34.3" width="2" height="2" fill="#111"/><line x1="537.3" y1="20" x2="537.3" y2="25" stroke="#111" stroke-width="1.2"/><rect x="536.3" y="27.7" width="2" height="2" fill="#111"/><rect x="536.3" y="31" width="2" height="2" fill="#111"/><rect x="536.3" y="34.3" width="2" height="2" fill="#111"/><rect x="566.8" y="21.5" width="14.8" height="16.9" rx="1" fill="none" stroke="#111" stroke-width="1.2"/><path d="M566.2,23 V38.5 Q566.2,39.2 567,39.2 H581" fill="none" stroke="#555" stroke-width="0.8"/><line x1="568.5" y1="25.3" x2="580" y2="25.3" stroke="#111" stroke-width="1"/><line x1="568.5" y1="27.7" x2="580" y2="27.7" stroke="#111" stroke-width="1"/><rect x="569.1" y="30.5" width="4.6" height="4.8" fill="#111"/><line x1="575" y1="31" x2="580" y2="31" stroke="#777" stroke-width="0.9"/><line x1="575" y1="33" x2="580" y2="33" stroke="#777" stroke-width="0.9"/><line x1="575" y1="35" x2="580" y2="35" stroke="#777" stroke-width="0.9"/><path d="M612.2,30 V25.5 Q612.2,21.6 615.9,21.6 Q619.6,21.6 619.6,25.5 V30" fill="none" stroke="#111" stroke-width="2.6"/><path d="M608.6,29.4 H623.2 V34 Q623.2,39.6 615.9,39.6 Q608.6,39.6 608.6,34 Z" fill="#111"/><circle cx="615.9" cy="32.4" r="1.6" fill="#fff"/><rect x="615.2" y="32.8" width="1.4" height="4.6" fill="#fff"/><path d="M650.2,29.5 H655.4 M657.4,29.5 H662.4 M656.4,23.3 V28.5 M656.4,30.5 V35.6" stroke="#111" stroke-width="1.5"/><path d="M660,32.4 L667,36 L663.8,36.6 L662.6,39.6 Z" fill="#111"/><circle cx="696.6" cy="27.6" r="6.3" fill="none" stroke="#111" stroke-width="1.7"/><path d="M701,32.2 L707.2,38.2" stroke="#111" stroke-width="2.6" stroke-linecap="round"/><path d="M691.8,29.2 L694,26.4 L696.6,29.6 L699.2,26 L701.2,28.2" fill="none" stroke="#111" stroke-width="1.2"/><path d="M735.0,36.4 H733.8 Q731.0,36.4 731.0,33 Q731.0,30 734.0,29.8 Q734.0,26.4 737.1999999999999,26 Q738.8,22.2 742.1999999999999,22.2 Q746.1999999999999,22.2 747.0,26.8 Q749.8,28 749.8,31.6 Q749.8,36.4 745.0,36.4 H744.0" fill="none" stroke="#111" stroke-width="1.25"/><path d="M740.3,28.6 L744,33.3 H741.4 V38.8 H739.2 V33.3 H736.6 Z" fill="#111"/><path d="M755,40.8 L748.6,40.8 L755,34.4 Z" fill="#8a8a8a"/><path d="M777.2,36.4 H776.0 Q773.2,36.4 773.2,33 Q773.2,30 776.2,29.8 Q776.2,26.4 779.4,26 Q781.0,22.2 784.4,22.2 Q788.4,22.2 789.2,26.8 Q792.0,28 792.0,31.6 Q792.0,36.4 787.2,36.4 H786.2" fill="none" stroke="#111" stroke-width="1.25"/><path d="M782.3,38.4 L786,33.6 H783.4 V28 H781.2 V33.6 H778.6 Z" fill="#111"/><path d="M796,40.8 L790.8,40.8 L796,35.599999999999994 Z" fill="#8a8a8a"/><path d="M819,22.6 L810.6,30 L819,37.5" fill="none" stroke="#111" stroke-width="2"/><path d="M840,22.6 L848.4,30 L840,37.5" fill="none" stroke="#111" stroke-width="2"/><path d="M886.91,27.25 L887.19,28.08 L889.49,28.35 L889.49,31.05 L887.19,31.32 L886.91,32.15 L886.53,32.93 L887.96,34.75 L886.05,36.66 L884.23,35.23 L883.45,35.61 L882.62,35.89 L882.35,38.19 L879.65,38.19 L879.38,35.89 L878.55,35.61 L877.77,35.23 L875.95,36.66 L874.04,34.75 L875.47,32.93 L875.09,32.15 L874.81,31.32 L872.51,31.05 L872.51,28.35 L874.81,28.08 L875.09,27.25 L875.47,26.47 L874.04,24.65 L875.95,22.74 L877.77,24.17 L878.55,23.79 L879.38,23.51 L879.65,21.21 L882.35,21.21 L882.62,23.51 L883.45,23.79 L884.23,24.17 L886.05,22.74 L887.96,24.65 L886.53,26.47Z M883.70,29.70 A2.7,2.7 0 1 0 878.30,29.70 A2.7,2.7 0 1 0 883.70,29.70Z" fill="#111" fill-rule="evenodd" /></svg>
</body></html>
